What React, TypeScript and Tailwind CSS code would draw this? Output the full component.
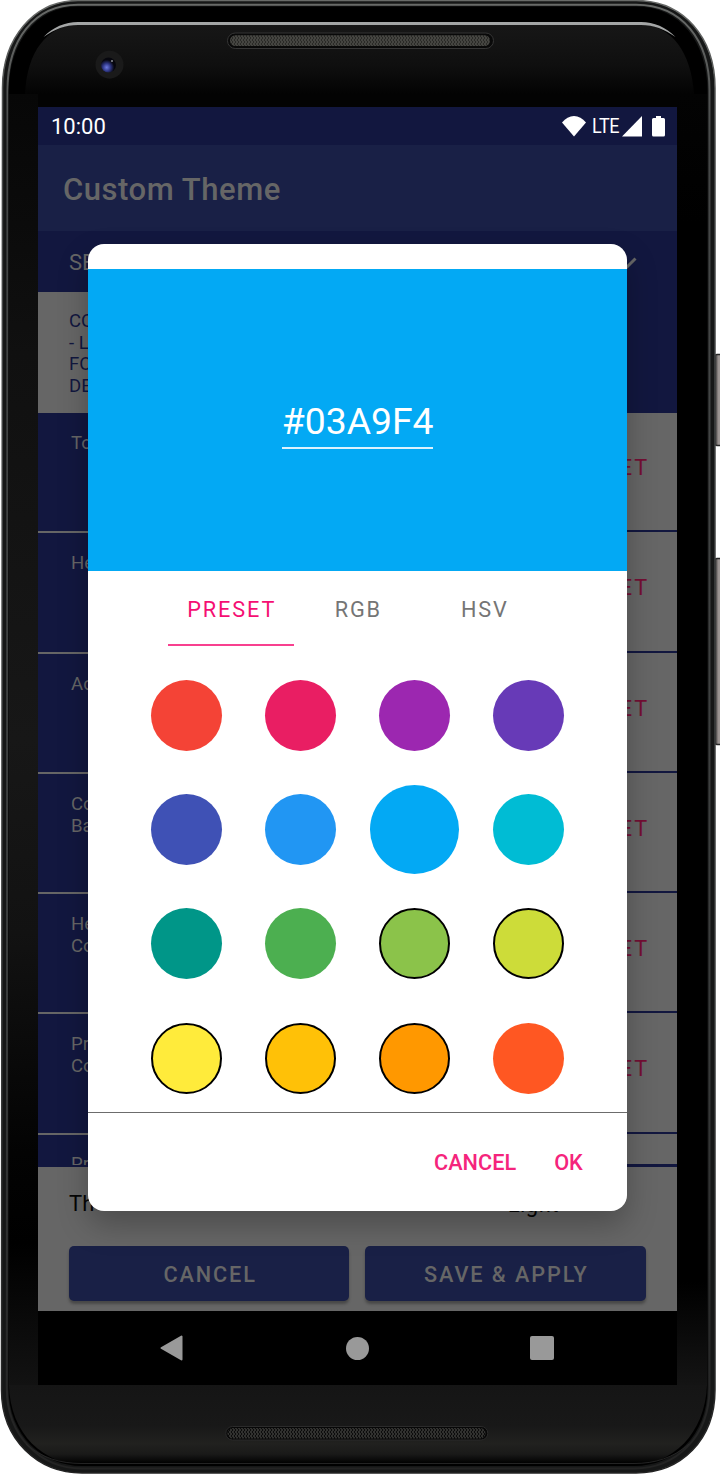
import React from "react";

const SWATCHES = [
  { fill: "bg-[#f44336]" },
  { fill: "bg-[#e91e63]" },
  { fill: "bg-[#9c27b0]" },
  { fill: "bg-[#673ab7]" },
  { fill: "bg-[#3f51b5]" },
  { fill: "bg-[#2196f3]" },
  { fill: "bg-[#03a9f4]", selected: true },
  { fill: "bg-[#00bcd4]" },
  { fill: "bg-[#009688]" },
  { fill: "bg-[#4caf50]" },
  { fill: "bg-[#8bc34a]", outlined: true },
  { fill: "bg-[#cddc39]", outlined: true },
  { fill: "bg-[#ffeb3b]", outlined: true },
  { fill: "bg-[#ffc107]", outlined: true },
  { fill: "bg-[#ff9800]", outlined: true },
  { fill: "bg-[#ff5722]" },
];

const ROWS = [["To"], ["He"], ["Ac"], ["Co", "Ba"], ["He", "Co"], ["Pr", "Co"]];

function PhoneBody() {
  return (
    <svg className="absolute inset-0" width="720" height="1474" viewBox="0 0 720 1474">
      <defs>
        <linearGradient id="topFace" gradientUnits="userSpaceOnUse" x1="0" y1="24" x2="0" y2="107">
          <stop offset="0" stopColor="#171717" />
          <stop offset="0.5" stopColor="#0f0f0f" />
          <stop offset="0.85" stopColor="#030303" />
          <stop offset="1" stopColor="#030303" />
        </linearGradient>
        <linearGradient id="leftFace" gradientUnits="userSpaceOnUse" x1="0" y1="94" x2="0" y2="1385">
          <stop offset="0" stopColor="#070707" />
          <stop offset="0.1" stopColor="#0b0b0b" />
          <stop offset="0.2" stopColor="#101010" />
          <stop offset="0.5" stopColor="#171717" />
          <stop offset="0.65" stopColor="#121212" />
          <stop offset="0.82" stopColor="#030303" />
          <stop offset="0.89" stopColor="#000000" />
          <stop offset="1" stopColor="#121212" />
        </linearGradient>
        <linearGradient id="rightFace" gradientUnits="userSpaceOnUse" x1="0" y1="94" x2="0" y2="1385">
          <stop offset="0" stopColor="#030303" />
          <stop offset="0.1" stopColor="#000000" />
          <stop offset="0.92" stopColor="#000000" />
          <stop offset="1" stopColor="#141414" />
        </linearGradient>
        <linearGradient id="bottomFace" gradientUnits="userSpaceOnUse" x1="0" y1="1385" x2="0" y2="1466">
          <stop offset="0" stopColor="#151515" />
          <stop offset="0.5" stopColor="#181818" />
          <stop offset="0.72" stopColor="#21211f" />
          <stop offset="0.85" stopColor="#1a1a19" />
          <stop offset="0.97" stopColor="#000000" />
        </linearGradient>
        <linearGradient id="rim" x1="0" y1="0" x2="0" y2="1">
          <stop offset="0" stopColor="#686a68" />
          <stop offset="0.1" stopColor="#464848" />
          <stop offset="0.7" stopColor="#3a3c3c" />
          <stop offset="1" stopColor="#232323" />
        </linearGradient>
        <linearGradient id="key" x1="0" y1="0" x2="1" y2="0">
          <stop offset="0" stopColor="#222" />
          <stop offset="0.45" stopColor="#999290" />
          <stop offset="1" stopColor="#a49d9b" />
        </linearGradient>
        <pattern id="mesh" width="3" height="4" patternUnits="userSpaceOnUse">
          <rect width="3" height="4" fill="#454541" />
          <path d="M0 0l2 2l-2 2" fill="none" stroke="#2a2a27" />
        </pattern>
        <pattern id="mesh2" width="3" height="4" patternUnits="userSpaceOnUse">
          <rect width="3" height="4" fill="#31312f" />
          <path d="M0 0l2 2l-2 2" fill="none" stroke="#0c0c0c" />
        </pattern>
        <radialGradient id="lens" cx=".38" cy=".66" r=".5">
          <stop offset="0" stopColor="#6e7ae0" />
          <stop offset="0.5" stopColor="#303888" />
          <stop offset="1" stopColor="#06060d" />
        </radialGradient>
      </defs>

      <rect x="715" y="354.500" width="7" height="91" rx="2" fill="url(#key)" stroke="#292929" strokeWidth="1.600" />
      <rect x="715" y="558.500" width="7" height="186" rx="2" fill="url(#key)" stroke="#292929" strokeWidth="1.600" />

      <path d="M78 .5H636C684 .5 715 38 715 88V1390C715 1440 681 1473 636 1473H82C38 1473 1.500 1440 1.500 1390L2.500 88C2.500 38 34 .5 78 .5Z" fill="#161717" stroke="url(#rim)" strokeWidth="1.500" />
      <path d="M78 4.700H636C682 4.700 709.500 40 709.500 90V1388C709.500 1437 676 1468.500 634 1468.500H82C41 1468.500 6.800 1437 6.800 1388L7.500 90C7.500 40 34 4.700 78 4.700Z" fill="none" stroke="url(#rim)" strokeWidth="2" />
      <path d="M78 6.500H636C680 6.500 707.500 42 707.500 92V1388C707.500 1436 674 1466 634 1466H82C43 1466 8.500 1436 8.500 1388V92C9 42 36 6.500 78 6.500Z" fill="#000" />
      <path d="M78 24H641C672 26 691 52 694 94V107H25V94C27 51 47 26 78 24Z" fill="url(#topFace)" />
      <path d="M9 94H38V1386H9Z" fill="url(#leftFace)" />
      <path d="M677 94H707V1386H677Z" fill="url(#rightFace)" />
      <path d="M9 1385H707C705 1434 672 1465 633 1465H84C44 1465 10 1434 9 1385Z" fill="url(#bottomFace)" />
      <path d="M26 1444C42 1458 60 1463.500 82 1463.500H634C655 1463.500 673 1458 689 1444" fill="none" stroke="#2c2c2c" strokeWidth="0.800" />
      <path d="M43.500 37C53 27 65 22.200 78 22H641C654 22.200 666 27 675.500 37C664 29 654 25.200 641 25H78C65 25.200 55 29 43.500 37Z" fill="#a4a6a6" />

      <rect x="227.500" y="33" width="266" height="15.500" rx="7.700" fill="#090909" stroke="#353535" />
      <rect x="230" y="35.200" width="260" height="10.800" rx="5.400" fill="url(#mesh)" />
      <rect x="225.800" y="1426.500" width="262" height="13.500" rx="6.700" fill="#070707" stroke="#2b2b2b" />
      <rect x="227.500" y="1428" width="258" height="10.500" rx="5.200" fill="url(#mesh2)" />

      <circle cx="109.500" cy="64.700" r="14" fill="#1a1a1a" />
      <circle cx="108.500" cy="65" r="7.500" fill="url(#lens)" />
      <circle cx="112" cy="61" r="1" fill="#8d8f98" />
    </svg>
  );
}

function StatusBar() {
  return (
    <div className="flex h-[38px] items-center bg-[#12173f] pl-[13px] text-white">
      <span className="pt-[2px] text-[22px] font-[450] leading-[26px]">10:00</span>
      <svg className="ml-auto mr-[6px]" width="24" height="21" viewBox="0 0 24 21">
        <path d="M12 20.500L0 6.500C3.500 2.200 7.500 0 12 0S20.500 2.200 24 6.500Z" fill="white" />
      </svg>
      <span className="w-[30px] origin-left scale-x-90 text-[20px] leading-[24px] tracking-[-0.4px]">LTE</span>
      <svg width="20" height="21" viewBox="0 0 20 21">
        <path d="M20 0V20.500H0Z" fill="white" />
      </svg>
      <svg className="ml-[10px] mr-[12px]" width="13" height="21" viewBox="0 0 13 21">
        <path d="M4 0H9V2H11.500Q13 2 13 3.500V19Q13 20.500 11.500 20.500H1.500Q0 20.500 0 19V3.500Q0 2 1.500 2H4Z" fill="white" />
      </svg>
    </div>
  );
}

function SettingsPage() {
  return (
    <div className="flex h-[1278px] w-[639px] flex-col overflow-hidden bg-[#666666]">
      <StatusBar />
      <div className="flex h-[86px] items-center bg-[#192046] pl-[25px] pt-[3px] text-[31px] font-medium leading-[36px] tracking-[0.550px] text-[#666666]">
        Custom Theme
      </div>
      <div className="flex h-[61px] items-center justify-between bg-[#12173f] pl-[31px] pr-[40px] pt-[2px] text-[22px] text-[#666666]">
        <span>SE</span>
        <svg width="20" height="14" viewBox="0 0 20 14">
          <path d="M2 3L10 11L18.500 2.500" fill="none" stroke="#666" strokeWidth="3" />
        </svg>
      </div>
      <div className="flex h-[121px]">
        <div className="flex-1 pl-[31px] pt-[19px] text-[18.500px] leading-[21.700px] text-[#12173f]">
          <div>CO</div>
          <div>- L</div>
          <div>FO</div>
          <div>DE</div>
        </div>
        <div className="w-[319px] bg-[#12173f]" />
      </div>
      {ROWS.map((lines, i) => (
        <div key={i} className="flex h-[120.300px] shrink-0">
          <div className="flex-1 border-b-2 border-[#666666] bg-[#12173f] pl-[33px] pt-[20px] text-[18.600px] leading-[21.800px] text-[#666666]">
            {lines.map((line) => (
              <div key={line}>{line}</div>
            ))}
          </div>
          <div className="flex h-[119.300px] w-[319px] justify-end border-b-2 border-[#12173f] pr-[28px] pt-[42px] text-[21.700px] leading-[26px] tracking-[1.900px] text-[#730f34]">
            RESET
          </div>
        </div>
      ))}
      <div className="flex h-[32px] shrink-0">
        <div className="h-[32px] flex-1 bg-[#12173f] pl-[33px] pt-[19px]">
          <div className="h-[11px] overflow-hidden text-[18.600px] leading-[21.800px] text-[#666666]">Pr</div>
        </div>
        <div className="w-[319px] border-b-[3px] border-[#12173f]" />
      </div>
      <div className="flex h-[79px] justify-between pl-[31px] pr-[118px] pt-[24px] text-[22px] leading-[26px] text-[#050505]">
        <span>Th</span>
        <span className="pt-[1px] tracking-[0.500px]">Light</span>
      </div>
      <div className="flex h-[55px] shrink-0 gap-[16px] pl-[31px] pr-[31.500px] text-[21.700px] font-medium tracking-[1.900px] text-[#666666]">
        <div className="flex flex-1 items-center justify-center rounded-[5px] bg-[#192046] pl-[2px] pt-[3px] shadow-[0_3px_3px_rgba(0,0,0,0.3)]">CANCEL</div>
        <div className="flex flex-1 items-center justify-center rounded-[5px] bg-[#192046] pl-[2px] pt-[3px] shadow-[0_3px_3px_rgba(0,0,0,0.3)]">SAVE &amp; APPLY</div>
      </div>
      <div className="mt-auto flex h-[74px] shrink-0 items-center justify-between bg-black pl-[121px] pr-[123px]">
        <svg width="26" height="28" viewBox="0 0 26 28">
          <path d="M2.500 14L22.500 2.500V25.500Z" fill="#999" stroke="#999" strokeWidth="2" strokeLinejoin="round" />
        </svg>
        <div className="h-[23px] w-[23px] rounded-full bg-[#999999]" />
        <div className="h-[24px] w-[24px] rounded-[2px] bg-[#999999]" />
      </div>
    </div>
  );
}

function ColorDialog() {
  return (
    <div className="absolute left-[88.400px] top-[244px] flex h-[967px] w-[538.400px] flex-col overflow-hidden rounded-[16px] bg-white pt-[25px] shadow-[0_14px_30px_rgba(0,0,0,0.25)]">
      <div className="flex h-[302px] shrink-0 justify-center bg-[#03a9f4] pt-[129px]">
        <div className="h-[51px] w-[151.500px] border-b-2 border-[#dcf2fe] text-center text-[37.300px] leading-[46px] text-white">#03A9F4</div>
      </div>
      <div className="flex h-[75px] shrink-0 pl-[79.200px] text-[21.700px] leading-[26px] tracking-[1.900px] text-[#757575]">
        <div className="flex h-[75px] w-[126.500px] flex-col justify-between pt-[26px] text-center text-[#f50f73]">
          <span className="pl-[2px]">PRESET</span>
          <div className="h-[2px] bg-[#f8408f]" />
        </div>
        <div className="flex w-[126.500px] justify-center pl-[2px] pt-[26px]">RGB</div>
        <div className="flex w-[126.500px] justify-center pl-[2px] pt-[26px]">HSV</div>
      </div>
      <div className="grid h-[466px] shrink-0 grid-cols-[repeat(4,114px)] grid-rows-[repeat(4,114.400px)] pl-[41.300px] pt-[12px]">
        {SWATCHES.map(({ fill, selected, outlined }) => (
          <div key={fill} className="flex items-center justify-center">
            <div className={`${fill} ${selected ? "h-[89px] w-[89px]" : "h-[71px] w-[71px]"} ${outlined ? "border-2 border-black" : ""} shrink-0 rounded-full`} />
          </div>
        ))}
      </div>
      <div className="flex flex-1 items-center justify-end gap-[38px] border-t border-[#6c6c6c] pr-[44px] pt-[2px] text-[21.700px] font-medium text-[#f5247c]">
        <span>CANCEL</span>
        <span>OK</span>
      </div>
    </div>
  );
}

export default function App() {
  return (
    <main className="relative h-[1474px] w-[720px] overflow-hidden bg-white font-['Roboto','Noto_Sans',sans-serif]">
      <PhoneBody />
      <div className="relative pl-[38px] pt-[107px]">
        <SettingsPage />
      </div>
      <ColorDialog />
    </main>
  );
}
